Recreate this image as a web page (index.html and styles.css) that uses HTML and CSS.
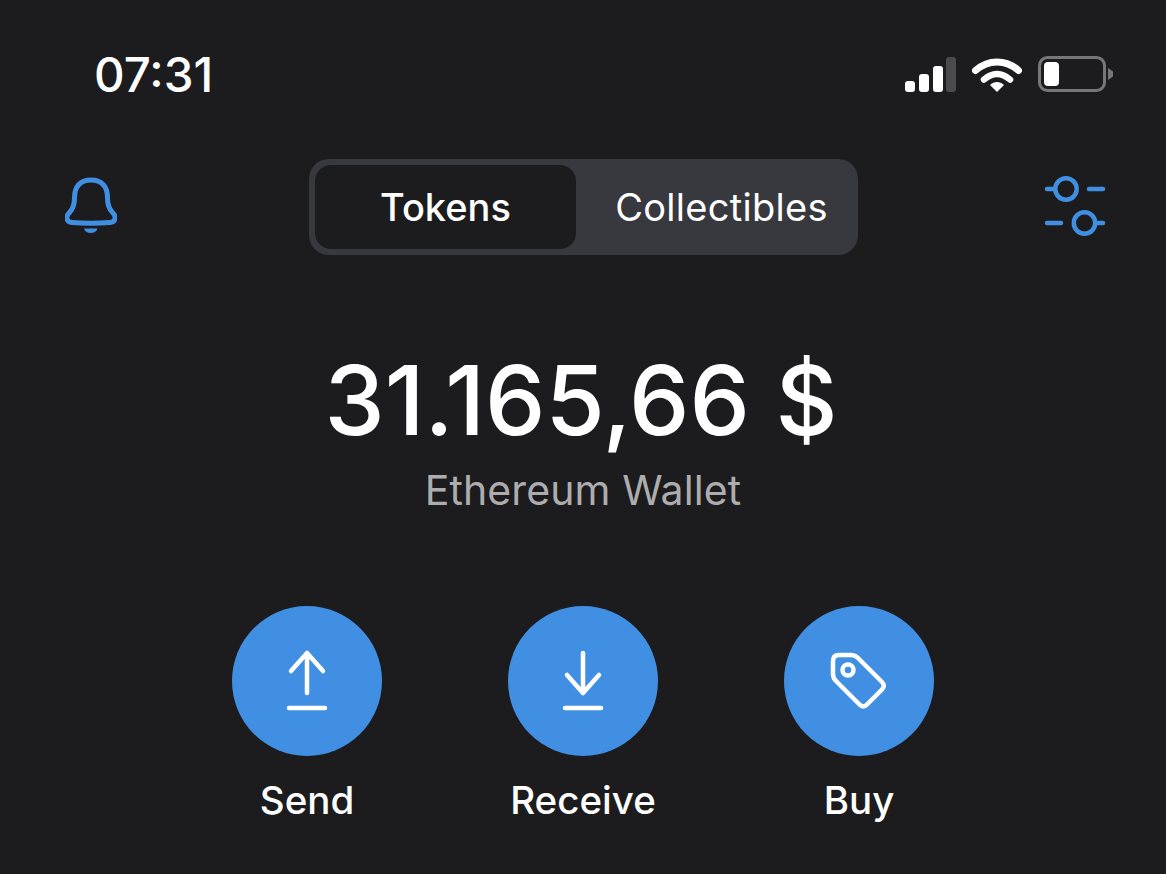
FILE: index.html
```html
<!DOCTYPE html>
<html lang="en">
<head>
    <meta charset="UTF-8">
    <meta name="viewport" content="width=device-width, initial-scale=1.0">
    <title>Wallet</title>
    <link rel="stylesheet" href="styles.css">
</head>
<body>
    <div class="status-bar">
        <div class="time">07:31</div>
        <div class="status-icons">
            <svg class="signal" width="52" height="36" viewBox="0 0 52 36">
                <rect x="1" y="25" width="10" height="11" rx="3" fill="#fff"/>
                <rect x="15" y="18" width="10" height="18" rx="3" fill="#fff"/>
                <rect x="29" y="10" width="10" height="26" rx="3" fill="#fff"/>
                <rect x="42" y="1" width="10" height="35" rx="3" fill="#4b4b4e"/>
            </svg>
            <svg class="wifi" width="50" height="36" viewBox="0 0 50 36">
                <path d="M3.500 14.500C16 3 34 3 46.500 14.500" fill="none" stroke="#fff" stroke-width="7" stroke-linecap="round"/>
                <path d="M12 23.500C20 16 30 16 38 23.500" fill="none" stroke="#fff" stroke-width="6.500" stroke-linecap="round"/>
                <path d="M18 29C22 25 28 25 32 29L25 36Z" fill="#fff"/>
            </svg>
            <svg class="battery" width="76" height="36" viewBox="0 0 76 36">
                <rect x="1.500" y="1.500" width="65" height="33" rx="8" fill="none" stroke="#77777a" stroke-width="3"/>
                <rect x="6" y="6" width="15" height="24" rx="4" fill="#fff"/>
                <path d="M70 12L75 15.500V20.500L70 24Z" fill="#77777a"/>
            </svg>
        </div>
    </div>

    <div class="top-row">
        <svg class="bell" width="52" height="60" viewBox="0 0 52 60" fill="none" stroke="#418fe3" stroke-width="5" stroke-linejoin="round">
            <path d="M26 3C14.500 3 9.500 10 9.500 21C9.500 28 8 32 4.500 35.500C0 40 1.500 45 7 45.500C19 46.500 33 46.500 45 45.500C50.500 45 52 40 47.500 35.500C44 32 42.500 28 42.500 21C42.500 10 37.500 3 26 3Z"/>
            <path d="M19 51.500H32.500C31 57.500 20.500 57.500 19 51.500Z" fill="#418fe3" stroke="none"/>
        </svg>
        <div class="segments">
            <div class="segment active">Tokens</div>
            <div class="segment other">Collectibles</div>
        </div>
        <svg class="sliders" width="62" height="62" viewBox="0 0 62 62" fill="none" stroke="#418fe3" stroke-width="4.500" stroke-linecap="round">
            <circle cx="22" cy="13" r="10.700"/>
            <circle cx="40.500" cy="47" r="10.700"/>
            <path d="M3 13H9.500M45 13H59M3 47H17M54 47H59"/>
        </svg>
    </div>

    <div class="balance">31.165,66 $</div>
    <div class="wallet-name">Ethereum Wallet</div>

    <div class="actions">
        <div class="action">
            <div class="circle">
                <svg width="48" height="64" viewBox="0 0 48 64" fill="none" stroke="#fff" stroke-width="4.500" stroke-linecap="round" stroke-linejoin="round">
                    <path d="M24 44V4M8 22L24 4L40 22M6 59H42"/>
                </svg>
            </div>
            <span>Send</span>
        </div>
        <div class="action">
            <div class="circle">
                <svg width="48" height="64" viewBox="0 0 48 64" fill="none" stroke="#fff" stroke-width="4.500" stroke-linecap="round" stroke-linejoin="round">
                    <path d="M24 4V44M8 26L24 44L40 26M6 59H42"/>
                </svg>
            </div>
            <span>Receive</span>
        </div>
        <div class="action">
            <div class="circle">
                <svg width="58" height="58" viewBox="0 0 58 58" fill="none" stroke="#fff" stroke-width="4.500" stroke-linejoin="round">
                    <path d="M3 9C3 5 5 3 9 3H21C24 3 26 4 28 6L52 30C54.500 32.500 54.500 35 52 37.500L37 52.500C34.500 55 32 55 29.500 52.500L6 29C4 27 3 25 3 22Z"/>
                    <circle cx="18" cy="18" r="5.500"/>
                </svg>
            </div>
            <span>Buy</span>
        </div>
    </div>
</body>
</html>
```

FILE: styles.css
```css
body {
    background-color: #1c1c1e;
    color: #ffffff;
    font-family: Inter, "Liberation Sans", sans-serif;
    margin: 0;
    height: 874px;
    overflow: hidden;
}

.status-bar {
    display: flex;
    justify-content: space-between;
    align-items: center;
    height: 150px;
    padding: 0 52px 0 94px;
    box-sizing: border-box;
}

.time {
    font-size: 47.500px;
    font-weight: 500;
    line-height: 52px;
}

.status-icons {
    display: flex;
    align-items: center;
    gap: 16px;
    margin-bottom: 2px;
}

.top-row {
    display: flex;
    justify-content: space-between;
    align-items: center;
    height: 114px;
    padding: 0 60px 0 65px;
}

.segments {
    display: flex;
    width: 549px;
    height: 96px;
    margin-left: 6px;
    padding: 6px;
    box-sizing: border-box;
    background-color: #38383f;
    border-radius: 20px;
    font-size: 38px;
}

.segment {
    display: flex;
    justify-content: center;
    align-items: center;
    flex: 1;
    border-radius: 16px;
}

.segment.active {
    flex: none;
    width: 261px;
    background-color: #1c1c1e;
    font-weight: 500;
}

.segment.other {
    padding-left: 15px;
    letter-spacing: 0.3px;
}

.balance {
    margin-top: 78px;
    padding-right: 4px;
    font-size: 96px;
    font-weight: 500;
    line-height: 116px;
    text-align: center;
}

.wallet-name {
    margin-top: 7px;
    font-size: 41px;
    letter-spacing: 0.1px;
    line-height: 50px;
    text-align: center;
    color: #adadaf;
}

.actions {
    display: flex;
    justify-content: center;
    gap: 126px;
    margin-top: 91px;
}

.action {
    display: flex;
    flex-direction: column;
    align-items: center;
    width: 150px;
    font-size: 38.500px;
    font-weight: 500;
}

.action span {
    margin-top: 21px;
    line-height: 46px;
}

.circle {
    display: flex;
    justify-content: center;
    align-items: center;
    width: 150px;
    height: 150px;
    border-radius: 50%;
    background-color: #418fe3;
}
```
